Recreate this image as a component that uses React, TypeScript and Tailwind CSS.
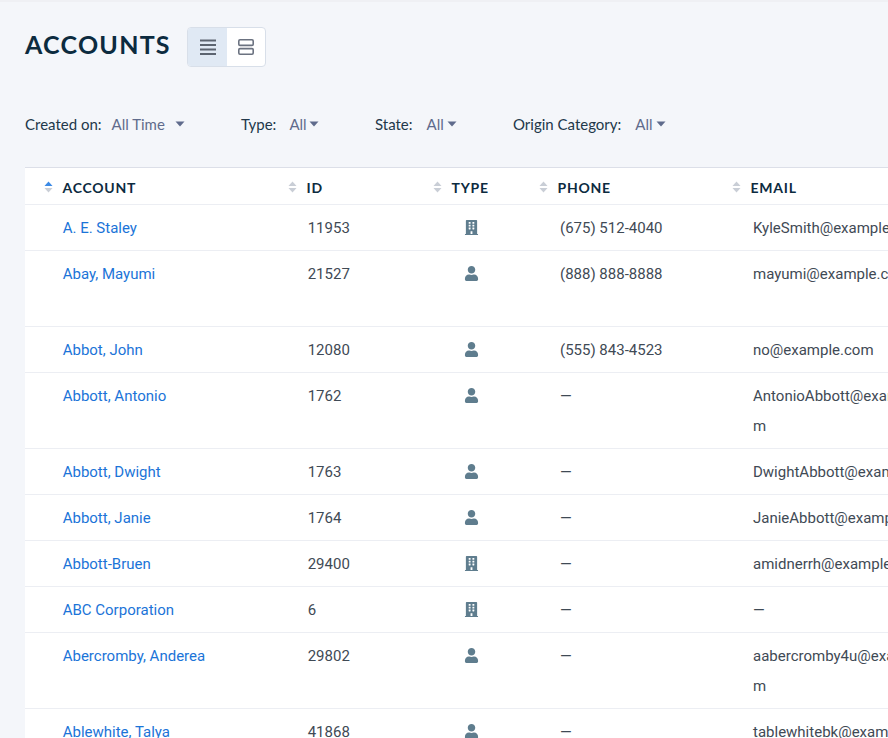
import { FaBuilding, FaUser } from "react-icons/fa";

type Row = {
  name: string;
  id: string;
  type: "org" | "person";
  phone: string;
  email: string;
  tall?: boolean;
};

const rows: Row[] = [
  { name: "A. E. Staley", id: "11953", type: "org", phone: "(675) 512-4040", email: "KyleSmith@example.com" },
  { name: "Abay, Mayumi", id: "21527", type: "person", phone: "(888) 888-8888", email: "mayumi@example.com", tall: true },
  { name: "Abbot, John", id: "12080", type: "person", phone: "(555) 843-4523", email: "no@example.com" },
  { name: "Abbott, Antonio", id: "1762", type: "person", phone: "—", email: "AntonioAbbott@example.com" },
  { name: "Abbott, Dwight", id: "1763", type: "person", phone: "—", email: "DwightAbbott@example.com" },
  { name: "Abbott, Janie", id: "1764", type: "person", phone: "—", email: "JanieAbbott@example.com" },
  { name: "Abbott-Bruen", id: "29400", type: "org", phone: "—", email: "amidnerrh@example.com" },
  { name: "ABC Corporation", id: "6", type: "org", phone: "—", email: "—" },
  { name: "Abercromby, Anderea", id: "29802", type: "person", phone: "—", email: "aabercromby4u@example.com" },
  { name: "Ablewhite, Talya", id: "41868", type: "person", phone: "—", email: "tablewhitebk@example.com" },
];

function SortArrows({ active }: { active?: boolean }) {
  return (
    <svg width="9" height="12" viewBox="0 0 9 12" className="mt-[2px] shrink-0">
      <path d="M4.5 0.5 L8.5 5 H0.5 Z" fill={active ? "#3b8ae6" : "#c9ced6"} />
      <path d="M4.5 11.5 L8.5 7 H0.5 Z" fill="#c9ced6" />
    </svg>
  );
}

function Caret() {
  return (
    <svg width="10" height="6" viewBox="0 0 10 6" className="shrink-0">
      <path d="M0.5 0.5 H9.5 L5 5.5 Z" fill="#5f6b8c" />
    </svg>
  );
}

function Filter({ label, value, className, labelGap, caretGap }: { label: string; value: string; className: string; labelGap: string; caretGap: string }) {
  return (
    <div className={`flex items-center ${className}`}>
      <span className="text-[#22384a]">{label}</span>
      <span className={`${labelGap} text-[#5f6b8c]`}>{value}</span>
      <span className={caretGap}>
        <Caret />
      </span>
    </div>
  );
}

function Header({ label, width, active }: { label: string; width: string; active?: boolean }) {
  return (
    <div className={`flex items-center gap-[9.5px] pl-[19px] ${width}`}>
      <SortArrows active={active} />
      <span className="pt-[2px] text-[14px] font-bold tracking-[0.75px] text-[#0c2b3f]">{label}</span>
    </div>
  );
}

export default function App() {
  return (
    <div className="h-[738px] w-[888px] overflow-hidden border-t-2 border-[#eff0f4] bg-[#f4f6fa] font-['Lato',sans-serif]">
      <div className="flex items-start pl-[25px] pt-[25px]">
        <h1 className="w-[146px] text-[25px] font-bold leading-[34px] tracking-[1.25px] text-[#0c2b3f]">ACCOUNTS</h1>
        <div className="ml-[16px] flex h-[40px] w-[79px] overflow-hidden rounded-[4px] border border-[#d8dfe9] bg-white">
          <div className="flex w-[39px] items-center justify-center bg-[#e0e9f4]">
            <svg width="16" height="16" viewBox="0 0 16 16" fill="none" stroke="#5c6470" strokeWidth="2">
              <path d="M0 1.5H16M0 6H16M0 10.5H16M0 15H16" />
            </svg>
          </div>
          <div className="flex flex-1 items-center justify-center">
            <svg width="16" height="16" viewBox="0 0 16 16" fill="none" stroke="#6b7280" strokeWidth="1.6">
              <rect x="0.8" y="0.8" width="14.4" height="5.6" rx="1.2" />
              <rect x="0.8" y="9.6" width="14.4" height="5.6" rx="1.2" />
            </svg>
          </div>
        </div>
      </div>

      <div className="flex pl-[25px] pt-[37px] text-[15px] leading-[40px]">
        <Filter label="Created on:" value="All Time" className="w-[216px]" labelGap="ml-[10px]" caretGap="ml-[10px]" />
        <Filter label="Type:" value="All" className="w-[134px]" labelGap="ml-[13px]" caretGap="ml-[2px]" />
        <Filter label="State:" value="All" className="w-[138px]" labelGap="ml-[14px]" caretGap="ml-[3px]" />
        <Filter label="Origin Category:" value="All" className="w-[170px]" labelGap="ml-[14px]" caretGap="ml-[3px]" />
      </div>

      <div className="ml-[25px] mt-[23px] w-[1000px] border-t border-[#dcdfe8] bg-white">
        <div className="flex h-[37px] items-center border-b border-[#eceef3]">
          <Header label="ACCOUNT" width="w-[244px]" active />
          <Header label="ID" width="w-[145px]" />
          <Header label="TYPE" width="w-[106px]" />
          <Header label="PHONE" width="w-[193px]" />
          <Header label="EMAIL" width="w-[300px]" />
        </div>
        {rows.map((r) => (
          <div
            key={r.name}
            className={`flex items-start border-b border-[#eceef3] pb-[7px] pt-[8px] font-['Roboto',sans-serif] text-[15px] leading-[30px] text-[#3f4a55] ${
              r.tall ? "min-h-[76px]" : ""
            }`}
          >
            <div className="w-[244px] pl-[37.7px] text-[#1b74d8]">{r.name}</div>
            <div className="w-[145px] pl-[38.7px]">{r.id}</div>
            <div className="flex h-[28px] w-[106px] items-center pl-[50px] text-[#5f7d8e]">
              {r.type === "org" ? <FaBuilding size={15} /> : <FaUser size={15} />}
            </div>
            <div className="w-[193px] pl-[40px]">{r.phone}</div>
            <div className="w-[237px] shrink-0 break-all pl-[40px]">{r.email}</div>
          </div>
        ))}
      </div>
    </div>
  );
}
